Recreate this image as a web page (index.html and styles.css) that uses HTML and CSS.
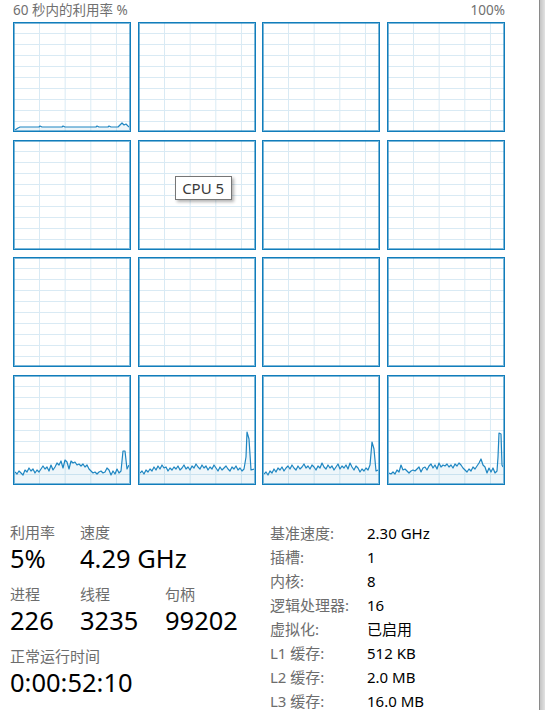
FILE: index.html
```html
<!DOCTYPE html>
<html lang="zh-CN">
<head>
    <meta charset="UTF-8">
    <title>CPU</title>
    <link rel="stylesheet" href="styles.css">
</head>
<body>
    <div class="window">
        <div class="main">
            <div class="graph-head">
                <span>60 秒内的利用率 %</span>
                <span>100%</span>
            </div>

            <div class="graphs">
                <!-- row 1 -->
                <div class="cell">
                    <svg viewBox="0 0 114 106" preserveAspectRatio="none">
                        <polygon class="fill" points="0,106 3,104 5,103 24,103 25,102 27,103 47,103 48,102 50,103 81,103 82,102 84,103 93,103 94,102 96,103 103,103 107,99 109,101 111,100 114,103 114,106"/>
                        <polyline class="line" points="0,106 3,104 5,103 24,103 25,102 27,103 47,103 48,102 50,103 81,103 82,102 84,103 93,103 94,102 96,103 103,103 107,99 109,101 111,100 114,103"/>
                    </svg>
                </div>
                <div class="cell"></div>
                <div class="cell"></div>
                <div class="cell"></div>

                <!-- row 2 -->
                <div class="cell"></div>
                <div class="cell">
                    <div class="tip">CPU 5</div>
                </div>
                <div class="cell"></div>
                <div class="cell"></div>

                <!-- row 3 -->
                <div class="cell"></div>
                <div class="cell"></div>
                <div class="cell"></div>
                <div class="cell"></div>

                <!-- row 4 -->
                <div class="cell">
                    <svg viewBox="0 0 114 106" preserveAspectRatio="none">
                        <polygon class="fill" points="0,95 2,97 4,94 6,96 8,98 10,93 12,95 14,91 16,94 18,92 20,96 22,93 24,95 26,92 28,89 30,92 32,90 34,94 36,88 38,93 40,90 42,86 44,88 46,84 48,91 50,83 52,85 54,92 56,84 58,86 60,85 62,88 64,87 66,89 68,87 70,90 72,88 74,92 76,94 78,96 80,95 82,97 84,95 86,94 88,96 90,95 92,91 94,93 96,98 98,94 100,97 102,92 104,96 106,94 108,74 110,74 112,92 114,88 114,106 0,106"/>
                        <polyline class="line" points="0,95 2,97 4,94 6,96 8,98 10,93 12,95 14,91 16,94 18,92 20,96 22,93 24,95 26,92 28,89 30,92 32,90 34,94 36,88 38,93 40,90 42,86 44,88 46,84 48,91 50,83 52,85 54,92 56,84 58,86 60,85 62,88 64,87 66,89 68,87 70,90 72,88 74,92 76,94 78,96 80,95 82,97 84,95 86,94 88,96 90,95 92,91 94,93 96,98 98,94 100,97 102,92 104,96 106,94 108,74 110,74 112,92 114,88"/>
                    </svg>
                </div>
                <div class="cell">
                    <svg viewBox="0 0 114 106" preserveAspectRatio="none">
                        <polygon class="fill" points="0,96 2,94 4,97 6,93 8,95 10,92 12,94 14,90 16,93 18,89 20,92 22,88 24,91 26,90 28,94 30,91 32,93 34,90 36,92 38,89 40,93 42,91 44,88 46,92 48,90 50,93 52,89 54,91 56,87 58,90 60,92 62,88 64,91 66,89 68,93 70,90 72,92 74,88 76,91 78,94 80,90 82,93 84,91 86,89 88,92 90,94 92,90 94,92 96,89 98,93 100,91 102,94 104,92 106,80 107,55 109,62 111,93 114,92 114,106 0,106"/>
                        <polyline class="line" points="0,96 2,94 4,97 6,93 8,95 10,92 12,94 14,90 16,93 18,89 20,92 22,88 24,91 26,90 28,94 30,91 32,93 34,90 36,92 38,89 40,93 42,91 44,88 46,92 48,90 50,93 52,89 54,91 56,87 58,90 60,92 62,88 64,91 66,89 68,93 70,90 72,92 74,88 76,91 78,94 80,90 82,93 84,91 86,89 88,92 90,94 92,90 94,92 96,89 98,93 100,91 102,94 104,92 106,80 107,55 109,62 111,93 114,92"/>
                    </svg>
                </div>
                <div class="cell">
                    <svg viewBox="0 0 114 106" preserveAspectRatio="none">
                        <polygon class="fill" points="0,97 2,95 4,98 6,94 8,96 10,92 12,95 14,91 16,93 18,90 20,94 22,91 24,89 26,92 28,88 30,91 32,93 34,89 36,92 38,90 40,87 42,91 44,89 46,92 48,88 50,90 52,93 54,89 56,91 58,86 60,90 62,92 64,88 66,91 68,89 70,93 72,90 74,87 76,92 78,89 80,91 82,88 84,92 86,86 88,90 90,93 92,89 94,91 96,95 98,92 100,94 102,91 104,93 106,88 108,65 110,72 112,94 114,93 114,106 0,106"/>
                        <polyline class="line" points="0,97 2,95 4,98 6,94 8,96 10,92 12,95 14,91 16,93 18,90 20,94 22,91 24,89 26,92 28,88 30,91 32,93 34,89 36,92 38,90 40,87 42,91 44,89 46,92 48,88 50,90 52,93 54,89 56,91 58,86 60,90 62,92 64,88 66,91 68,89 70,93 72,90 74,87 76,92 78,89 80,91 82,88 84,92 86,86 88,90 90,93 92,89 94,91 96,95 98,92 100,94 102,91 104,93 106,88 108,65 110,72 112,94 114,93"/>
                    </svg>
                </div>
                <div class="cell">
                    <svg viewBox="0 0 114 106" preserveAspectRatio="none">
                        <polygon class="fill" points="0,96 2,97 4,95 6,97 8,93 10,95 12,88 14,93 16,92 18,94 20,96 22,94 24,93 26,94 28,92 30,90 32,95 34,91 36,90 38,93 40,89 42,87 44,91 46,88 48,92 50,86 52,90 54,88 56,89 58,87 60,90 62,88 64,91 66,87 68,89 70,86 72,88 74,91 76,93 78,95 80,92 82,94 84,90 86,92 88,89 90,86 92,82 94,88 96,90 98,96 100,91 102,95 104,91 106,96 108,94 109,80 110,56 112,57 113,88 114,90 114,106 0,106"/>
                        <polyline class="line" points="0,96 2,97 4,95 6,97 8,93 10,95 12,88 14,93 16,92 18,94 20,96 22,94 24,93 26,94 28,92 30,90 32,95 34,91 36,90 38,93 40,89 42,87 44,91 46,88 48,92 50,86 52,90 54,88 56,89 58,87 60,90 62,88 64,91 66,87 68,89 70,86 72,88 74,91 76,93 78,95 80,92 82,94 84,90 86,92 88,89 90,86 92,82 94,88 96,90 98,96 100,91 102,95 104,91 106,96 108,94 109,80 110,56 112,57 113,88 114,90"/>
                    </svg>
                </div>
            </div>

            <div class="stats">
                <div class="stats-left">
                    <div class="stat">
                        <div class="label">利用率</div>
                        <div class="value">5%</div>
                    </div>
                    <div class="stat">
                        <div class="label">速度</div>
                        <div class="value">4.29 GHz</div>
                    </div>
                    <div class="stat"></div>

                    <div class="stat">
                        <div class="label">进程</div>
                        <div class="value">226</div>
                    </div>
                    <div class="stat">
                        <div class="label">线程</div>
                        <div class="value">3235</div>
                    </div>
                    <div class="stat">
                        <div class="label">句柄</div>
                        <div class="value">99202</div>
                    </div>

                    <div class="stat wide">
                        <div class="label">正常运行时间</div>
                        <div class="value">0:00:52:10</div>
                    </div>
                </div>

                <dl class="stats-right">
                    <dt>基准速度:</dt><dd>2.30 GHz</dd>
                    <dt>插槽:</dt><dd>1</dd>
                    <dt>内核:</dt><dd>8</dd>
                    <dt>逻辑处理器:</dt><dd>16</dd>
                    <dt>虚拟化:</dt><dd>已启用</dd>
                    <dt>L1 缓存:</dt><dd>512 KB</dd>
                    <dt>L2 缓存:</dt><dd>2.0 MB</dd>
                    <dt>L3 缓存:</dt><dd>16.0 MB</dd>
                </dl>
            </div>
        </div>
        <div class="edge"></div>
    </div>
</body>
</html>
```

FILE: styles.css
```css
html, body {
    margin: 0;
    padding: 0;
    height: 710px;
    overflow: hidden;
    background: #fff;
}
body {
    font-family: "Noto Sans", "Noto Sans CJK SC", sans-serif;
    color: #000;
}
.window {
    display: flex;
    height: 710px;
}
.main {
    flex: 1;
    min-width: 0;
}
.edge {
    width: 6px;
    border-left: 1px solid #8a8a8a;
    background: linear-gradient(to right, #c4c4c4, #e2e2e2);
    box-sizing: border-box;
}

/* graph area */
.graph-head {
    display: flex;
    justify-content: space-between;
    width: 492px;
    margin-left: 13px;
    height: 22px;
    line-height: 20px;
    font-size: 13.5px;
    color: #707070;
}
.graphs {
    display: grid;
    grid-template-columns: repeat(4, 118px);
    grid-auto-rows: 110px;
    column-gap: 6.67px;
    row-gap: 7.67px;
    margin-left: 13px;
}
.cell {
    position: relative;
    box-sizing: border-box;
    border: 1px solid #117dbb;
    padding: 1px;
    box-shadow: inset 0 0 0 1px rgba(17, 125, 187, 0.55);
    background-color: #fff;
    background-image:
        linear-gradient(to bottom, #d9eaf4 1px, transparent 1px),
        linear-gradient(to right, #d9eaf4 1px, transparent 1px);
    background-size: 100% 11px, 25.67px 100%;
    background-position: 0 10px, 25px 0;
}
.cell svg {
    display: block;
    width: 100%;
    height: 100%;
}
.cell .line {
    fill: none;
    stroke: #1e86c2;
    stroke-width: 1.2;
    stroke-linejoin: round;
}
.cell .fill {
    fill: rgba(17, 125, 187, 0.07);
    stroke: none;
}
.tip {
    position: absolute;
    left: 36px;
    top: 35px;
    width: 57px;
    height: 24px;
    box-sizing: border-box;
    border: 1px solid #767676;
    background: #fff;
    box-shadow: 2px 2px 3px rgba(0, 0, 0, 0.3);
    font-size: 15px;
    line-height: 22px;
    text-align: center;
    color: #3a3a3a;
}

/* stats */
.stats {
    display: flex;
    margin-top: 37.5px;
}
.stats-left {
    display: grid;
    grid-template-columns: 70px 85px auto;
    row-gap: 10px;
    width: 270px;
    padding-left: 10px;
    box-sizing: border-box;
    align-content: start;
}
.stat.wide {
    grid-column: 1 / 4;
}
.label {
    font-size: 15px;
    line-height: 20px;
    color: #6d6d6d;
}
.value {
    font-size: 25.5px;
    line-height: 32px;
    white-space: nowrap;
}
.stats-right {
    display: grid;
    grid-template-columns: 97px auto;
    margin: -1.5px 0 0;
    font-size: 15px;
    line-height: 24px;
}
.stats-right dt {
    color: #6d6d6d;
}
.stats-right dd {
    margin: 0;
}
```
